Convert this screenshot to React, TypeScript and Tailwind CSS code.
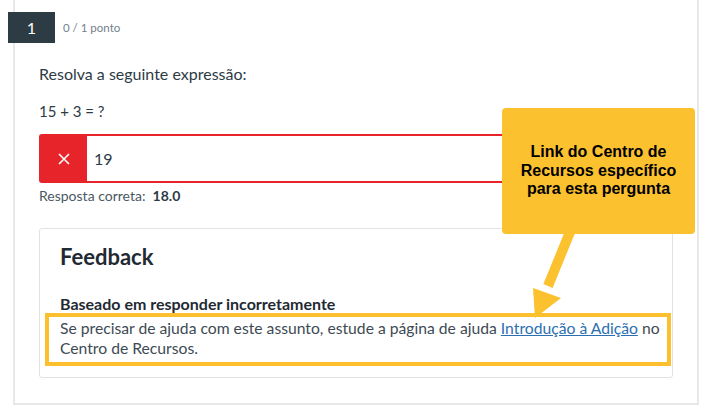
export default function App() {
  const lato = { fontFamily: "Lato, 'Noto Sans', sans-serif" };
  return (
    <div className="relative w-[711px] h-[407px] overflow-hidden bg-white" style={lato}>
      {/* question card */}
      <div className="ml-[13px] w-[686px] h-[405px] border-l-2 border-r-2 border-b-2 border-[#e8e8e8] pt-[12px]">
        <div className="flex items-center -ml-[7px]">
          <div className="w-[47px] h-[31px] bg-[#2d3b45] text-white text-[16px] flex items-center justify-center">1</div>
          <div className="ml-[8px] text-[11.5px] text-[#73818c]">0 / 1 ponto</div>
        </div>

        <div className="pl-[24px] pr-[24px] text-[#2d3b45]">
          <p className="mt-[19px] text-[16px] leading-[24px]">Resolva a seguinte expressão:</p>
          <p className="mt-[13px] text-[15px] leading-[24px]">15 + 3 = ?</p>

          {/* submitted answer */}
          <div className="mt-[11px] w-[634px] h-[49px] flex border-2 border-[#e62429] rounded-[3px]">
            <div className="w-[46px] bg-[#e62429] flex items-center justify-center">
              <svg width="12" height="12" viewBox="0 0 12 12">
                <path d="M1 1 L11 11 M11 1 L1 11" stroke="white" strokeWidth="1.6" />
              </svg>
            </div>
            <div className="pl-[7px] flex items-center text-[16px]">19</div>
          </div>
          <div className="mt-[3px] text-[14px] leading-[20px] text-[#4b5863]">
            Resposta correta:&nbsp; <span className="font-bold text-[#2d3b45]">18.0</span>
          </div>

          {/* feedback panel */}
          <div className="relative mt-[22px] w-[634px] h-[150px] border border-[#e2e2e2] rounded-[3px] pl-[20px] pt-[14px]">
            <h2 className="text-[22px] font-bold leading-[28px] text-[#1f2a33]">Feedback</h2>
            <h3 className="mt-[23px] text-[16px] font-bold leading-[20px] text-[#1f2a33]">Baseado em responder incorretamente</h3>
            <p className="mt-[4px] text-[15.7px] leading-[20px] text-[#3d4a54]">
              Se precisar de ajuda com este assunto, estude a página de ajuda{" "}
              <a className="text-[#2b6fb1] underline">Introdução à Adição</a> no Centro de Recursos.
            </p>
            <div className="absolute left-[5px] top-[84px] w-[626px] h-[53px] border-[4px] border-[#fcc02e]" />
          </div>
        </div>
      </div>

      {/* callout */}
      <div
        className="absolute left-[502px] top-[108px] w-[193px] h-[126px] bg-[#fcc12e] rounded-[4px] flex items-center justify-center text-center text-[16px] font-bold leading-[18.5px] text-black"
        style={{ fontFamily: "'Liberation Sans', Arial, sans-serif" }}
      >
        <span>
          Link do Centro de
          <br />
          Recursos específico
          <br />
          para esta pergunta
        </span>
      </div>
      <svg className="absolute left-0 top-0" width="711" height="407" viewBox="0 0 711 407">
        <path d="M570 232 L548 286" stroke="#fcc12e" strokeWidth="10" />
        <path d="M533 288 L561 298 L535 318 Z" fill="#fcc12e" />
      </svg>
    </div>
  );
}
